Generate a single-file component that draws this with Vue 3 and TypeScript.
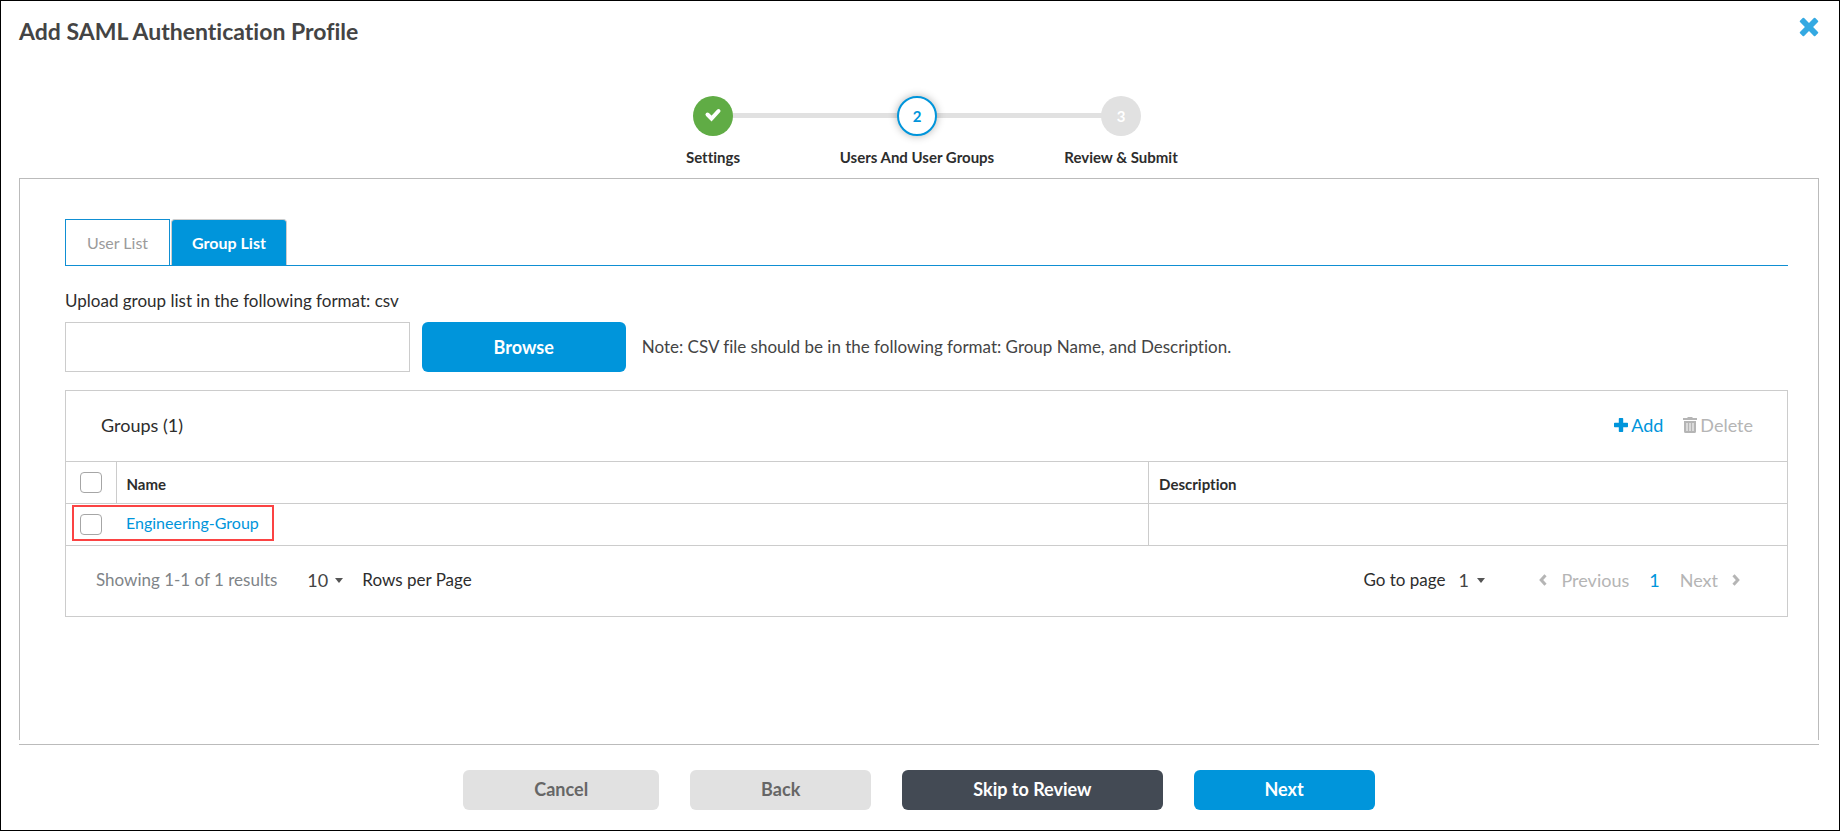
<script setup lang="ts">
import { computed, ref } from 'vue'

interface Step {
  label: string
  state: 'done' | 'current' | 'pending'
}
interface Group {
  name: string
  description: string
}

const steps: Step[] = [
  { label: 'Settings', state: 'done' },
  { label: 'Users And User Groups', state: 'current' },
  { label: 'Review & Submit', state: 'pending' },
]
const tabs: string[] = ['User List', 'Group List']
const activeTab = ref('Group List')
const fileName = ref('')
const groups = ref<Group[]>([{ name: 'Engineering-Group', description: '' }])
const selected = ref<string[]>([])
const rowsPerPage = ref(10)
const page = ref(1)

const allSelected = computed({
  get: () => groups.value.length > 0 && selected.value.length === groups.value.length,
  set: (on: boolean) => {
    selected.value = on ? groups.value.map((g) => g.name) : []
  },
})
</script>

<template>
  <div class="dialog">
    <header class="head">
      <h1>Add SAML Authentication Profile</h1>
      <button type="button" class="close" aria-label="Close">
        <svg viewBox="0 0 20 20" width="20" height="20">
          <path d="M3.700 1 1 3.700a1 1 0 0 0 0 1.400L5.900 10 1 14.900a1 1 0 0 0 0 1.400L3.700 19a1 1 0 0 0 1.400 0L10 14.100 14.900 19a1 1 0 0 0 1.400 0L19 16.300a1 1 0 0 0 0-1.400L14.100 10 19 5.100a1 1 0 0 0 0-1.400L16.300 1a1 1 0 0 0-1.400 0L10 5.900 5.100 1a1 1 0 0 0-1.400 0z" />
        </svg>
      </button>
    </header>

    <ol class="steps">
      <li v-for="(step, i) in steps" :key="step.label" :class="step.state">
        <span class="bullet">
          <svg v-if="step.state === 'done'" viewBox="0 0 18 18" width="18" height="18">
            <path d="M3.500 7.500 7.500 11.500 14.500 4" />
          </svg>
          <template v-else>{{ i + 1 }}</template>
        </span>
        <span class="step-label">{{ step.label }}</span>
      </li>
    </ol>

    <main class="panel">
      <div class="tabs" role="tablist">
        <button
          v-for="tab in tabs"
          :key="tab"
          type="button"
          role="tab"
          :aria-selected="tab === activeTab"
          :class="{ active: tab === activeTab }"
          @click="activeTab = tab"
        >{{ tab }}</button>
      </div>

      <label class="upload-label" for="csv-file">Upload group list in the following format: csv</label>
      <div class="upload">
        <input id="csv-file" v-model="fileName" type="text" />
        <button type="button" class="btn primary browse">Browse</button>
        <span class="note">Note: CSV file should be in the following format: Group Name, and Description.</span>
      </div>

      <section class="grid">
        <div class="grid-head">
          <h2>Groups ({{ groups.length }})</h2>
          <button type="button" class="action">
            <svg viewBox="0 0 14 14" width="14" height="14">
              <path d="M5.500 0h3a.7.7 0 0 1 .7.7v4.100h4.100a.7.7 0 0 1 .7.7v3a.7.7 0 0 1-.7.7H9.200v4.100a.7.7 0 0 1-.7.7h-3a.7.7 0 0 1-.7-.7V9.200H.7A.7.7 0 0 1 0 8.500v-3a.7.7 0 0 1 .7-.7h4.100V.7a.7.7 0 0 1 .7-.7z" />
            </svg>Add
          </button>
          <button type="button" class="action" disabled>
            <svg viewBox="0 0 14 16" width="14" height="16">
              <path fill-rule="evenodd" d="M5 0h4l1 1h4v2H0V1h4zM1 4h12v10.500a1.500 1.500 0 0 1-1.500 1.500h-9A1.500 1.500 0 0 1 1 14.500zM3.500 6v8h1V6zm3 0v8h1V6zm3 0v8h1V6z" />
            </svg>Delete
          </button>
        </div>

        <table>
          <colgroup>
            <col class="col-check" />
            <col class="col-name" />
            <col />
          </colgroup>
          <thead>
            <tr>
              <th><input v-model="allSelected" type="checkbox" aria-label="Select all groups" /></th>
              <th>Name</th>
              <th>Description</th>
            </tr>
          </thead>
          <tbody>
            <tr v-for="g in groups" :key="g.name">
              <td>
                <input v-model="selected" type="checkbox" :value="g.name" :aria-label="g.name" />
                <span class="highlight"></span>
              </td>
              <td><a href="#">{{ g.name }}</a></td>
              <td>{{ g.description }}</td>
            </tr>
          </tbody>
        </table>

        <footer class="pager">
          <span class="showing">Showing 1-1 of 1 results</span>
          <span class="picker">
            <select id="rows" v-model="rowsPerPage">
              <option :value="10">10</option>
              <option :value="25">25</option>
              <option :value="50">50</option>
            </select>
            <svg viewBox="0 0 8 5" width="8" height="5"><path d="M0 0h8L4 5z" /></svg>
          </span>
          <label for="rows" class="rows-label">Rows per Page</label>
          <label for="page" class="goto">Go to page</label>
          <span class="picker narrow">
            <select id="page" v-model="page">
              <option :value="1">1</option>
            </select>
            <svg viewBox="0 0 8 5" width="8" height="5"><path d="M0 0h8L4 5z" /></svg>
          </span>
          <nav>
            <button type="button" disabled>
              <svg viewBox="0 0 8 12" width="8" height="12"><path d="M6.500 1.300 2.200 6l4.300 4.700" /></svg>Previous
            </button>
            <button type="button" class="current-page" aria-current="page">1</button>
            <button type="button" disabled>
              Next<svg viewBox="0 0 8 12" width="8" height="12"><path d="M1.500 1.300 5.800 6l-4.300 4.700" /></svg>
            </button>
          </nav>
        </footer>
      </section>
    </main>

    <footer class="buttons">
      <button type="button" class="btn">Cancel</button>
      <button type="button" class="btn">Back</button>
      <button type="button" class="btn dark">Skip to Review</button>
      <button type="button" class="btn primary">Next</button>
    </footer>
  </div>
</template>

<style>
body {
  margin: 0;
  background: #fff;
}
</style>

<style scoped>
.dialog,
.dialog * {
  box-sizing: border-box;
}
.dialog {
  display: flex;
  flex-direction: column;
  min-height: 100vh;
  padding: 16px 20px 20px 18px;
  border: 1px solid #000;
  color: #2d2d2d;
  font: 18px/24px Lato, 'Liberation Sans', sans-serif;
  font-variant-ligatures: no-common-ligatures;
}
button,
select,
input {
  margin: 0;
  padding: 0;
  border: 0;
  background: none;
  color: inherit;
  font: inherit;
}
button {
  cursor: pointer;
}
.head {
  display: flex;
  justify-content: space-between;
  align-items: flex-start;
}
h1 {
  margin: 0;
  color: #444;
  font-size: 23px;
  font-weight: 700;
  line-height: 28px;
}
.close svg {
  display: block;
  fill: #34a9e2;
}
.steps {
  display: grid;
  grid-template-columns: repeat(3, 204px);
  justify-content: center;
  margin: 51px 0 11px;
  padding: 0 4px 0 0;
  list-style: none;
}
.steps li {
  position: relative;
  display: flex;
  flex-direction: column;
  align-items: center;
  gap: 11px;
}
.steps li + li::before {
  content: '';
  position: absolute;
  top: 17px;
  right: 50%;
  width: 100%;
  height: 5px;
  background: #e1e1e1;
}
.bullet {
  z-index: 1;
  display: flex;
  align-items: center;
  justify-content: center;
  width: 40px;
  height: 40px;
  border-radius: 50%;
  background: #e1e1e1;
  color: #fff;
  font-size: 15px;
  font-weight: 700;
}
.done .bullet {
  background: #60ac45;
}
.done path {
  fill: none;
  stroke: #fff;
  stroke-width: 4;
  stroke-linecap: round;
}
.current .bullet {
  border: 2px solid #0095db;
  background: #fff;
  box-shadow: 0 0 8px rgba(0, 0, 0, 0.3);
  color: #0095db;
}
.step-label {
  font-size: 15px;
  font-weight: 700;
  line-height: 20px;
  white-space: nowrap;
}
.panel {
  position: relative;
  flex: 1;
  padding: 40px 30px 40px 45px;
  border: 1px solid #bbb;
  border-bottom: 0;
}
.tabs {
  display: flex;
  gap: 1px;
  border-bottom: 1px solid #0f8fd3;
}
.tabs button {
  height: 46px;
  padding: 0 21px;
  border: 1px solid #0f8fd3;
  border-bottom: 0;
  color: #9b9b9b;
  font-size: 16px;
}
.tabs button.active {
  padding: 0 20px;
  border-color: #ccc;
  border-radius: 4px 4px 0 0;
  background: #0095db;
  color: #fff;
  font-weight: 700;
}
.upload-label {
  display: block;
  margin: 23px 0 9px;
  font-size: 17px;
}
.upload {
  display: flex;
  align-items: center;
}
.upload input {
  width: 20%;
  height: 50px;
  padding: 0 12px;
  border: 1px solid #ccc;
}
.btn {
  height: 40px;
  padding: 0 71px 2px;
  border-radius: 6px;
  background: #e1e1e1;
  color: #666;
  font-weight: 700;
}
.btn.primary {
  background: #0095db;
  color: #fff;
}
.btn.dark {
  background: #434a54;
  color: #fff;
}
.btn.browse {
  height: 50px;
  padding: 0 72px;
  margin: 0 16px 0 12px;
}
.note {
  color: #444;
  font-size: 17px;
}
.grid {
  margin-top: 18px;
  border: 1px solid #ccc;
}
.grid-head {
  display: flex;
  align-items: center;
  gap: 20px;
  height: 70px;
  padding: 0 34px 2px 35px;
}
h2 {
  flex: 1;
  margin: 0;
  font-size: 18px;
  font-weight: 400;
}
.action {
  display: flex;
  align-items: center;
  gap: 3px;
  color: #0095db;
}
.action:disabled {
  color: #b5b5b5;
}
.action svg {
  fill: currentColor;
}
table {
  width: 100%;
  border-collapse: collapse;
  table-layout: fixed;
}
.col-check {
  width: 50px;
}
.col-name {
  width: 60%;
}
tr {
  height: 42px;
  border-top: 1px solid #ccc;
  border-bottom: 1px solid #ccc;
}
th,
td {
  position: relative;
  padding: 0 10px;
  text-align: left;
  line-height: 20px;
}
th {
  padding-top: 2px;
  font-size: 15px;
  font-weight: 700;
}
td {
  padding-bottom: 3px;
  font-size: 16px;
}
th:first-child,
td:first-child {
  padding: 0 0 0 14px;
}
th + th,
td:last-child {
  border-left: 1px solid #ccc;
}
input[type='checkbox'] {
  display: block;
  width: 22px;
  height: 21px;
  border: 1px solid #a6a6a6;
  border-radius: 4px;
  background: #fff;
  appearance: none;
}
input[type='checkbox']:checked {
  background: #0095db;
}
a {
  color: #0095db;
  text-decoration: none;
}
.highlight {
  position: absolute;
  z-index: 1;
  top: 1px;
  left: 6px;
  width: 202px;
  height: 36px;
  border: 2px solid #fb4343;
  pointer-events: none;
}
.pager {
  display: flex;
  align-items: center;
  height: 70px;
  padding: 0 47px 2px 30px;
}
.showing {
  margin-right: 30px;
  color: #808488;
  font-size: 17px;
}
.picker {
  display: grid;
  grid-template-columns: 36px;
  align-items: center;
  color: #444;
}
.picker.narrow {
  grid-template-columns: 27px;
}
.picker select,
.picker svg {
  grid-area: 1 / 1;
}
.picker select {
  appearance: none;
  cursor: pointer;
}
.picker svg {
  justify-self: end;
  fill: #555;
  pointer-events: none;
}
.rows-label {
  margin-left: 19px;
  font-size: 17px;
}
.goto {
  margin: 0 13px 0 auto;
  font-size: 17px;
}
nav {
  display: flex;
  gap: 20px;
  margin-left: 54px;
}
nav button {
  display: flex;
  align-items: center;
  gap: 14px;
  color: #b5b5b5;
}
nav .current-page {
  color: #0095db;
}
nav path {
  fill: none;
  stroke: #b5b5b5;
  stroke-width: 3;
}
.buttons {
  display: flex;
  justify-content: center;
  gap: 31px;
  margin-top: 4px;
  padding-top: 25px;
  border-top: 1px solid #bbb;
}
</style>
